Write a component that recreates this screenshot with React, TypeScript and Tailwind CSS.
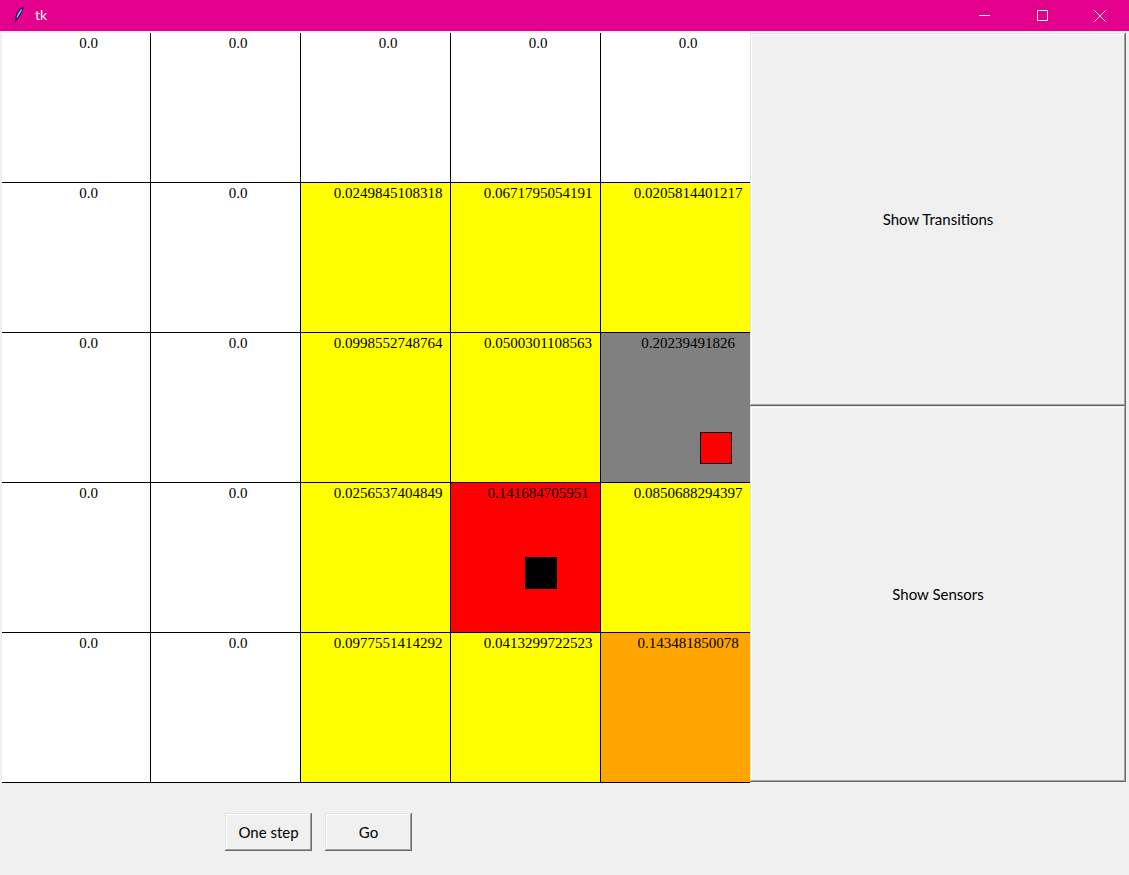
import React from "react";

type Cell = { v: string; bg: string; mark?: "red" | "black" };

const W = "bg-white";
const Y = "bg-[#ffff00]";

const rows: Cell[][] = [
  [
    { v: "0.0", bg: W },
    { v: "0.0", bg: W },
    { v: "0.0", bg: W },
    { v: "0.0", bg: W },
    { v: "0.0", bg: W },
  ],
  [
    { v: "0.0", bg: W },
    { v: "0.0", bg: W },
    { v: "0.0249845108318", bg: Y },
    { v: "0.0671795054191", bg: Y },
    { v: "0.0205814401217", bg: Y },
  ],
  [
    { v: "0.0", bg: W },
    { v: "0.0", bg: W },
    { v: "0.0998552748764", bg: Y },
    { v: "0.0500301108563", bg: Y },
    { v: "0.20239491826", bg: "bg-[#808080]", mark: "red" },
  ],
  [
    { v: "0.0", bg: W },
    { v: "0.0", bg: W },
    { v: "0.0256537404849", bg: Y },
    { v: "0.141684705951", bg: "bg-[#ff0000]", mark: "black" },
    { v: "0.0850688294397", bg: Y },
  ],
  [
    { v: "0.0", bg: W },
    { v: "0.0", bg: W },
    { v: "0.0977551414292", bg: Y },
    { v: "0.0413299722523", bg: Y },
    { v: "0.143481850078", bg: "bg-[#ffa500]" },
  ],
];

const raised =
  "shadow-[inset_-1px_-1px_#696969,inset_1px_1px_#e3e3e3,inset_-2px_-2px_#a0a0a0,inset_2px_2px_#ffffff]";

// tk feather icon
const Feather = () => (
  <svg width="10" height="16" viewBox="0 0 10 16">
    <path
      d="M9 0.8 C5.5 1.8 2.5 5.5 1.8 11.5 L3.2 11.8 C5.5 8.5 8.5 5 9 0.8 Z"
      fill="#4a7fd6"
      stroke="#0f1d3d"
      strokeWidth="1.1"
    />
    <path d="M7.8 2.6 L3 10.5" stroke="#b9d2f7" strokeWidth="0.8" />
    <path d="M2.2 11.6 L1.2 15" stroke="#111" strokeWidth="1.3" />
  </svg>
);

const App = () => {
  return (
    <div className="w-[1129px] h-[875px] bg-[#f0f0f0] flex flex-col overflow-hidden">
      <div className="h-[31px] bg-[#e3008c] flex items-center text-white shrink-0">
        <div className="ml-[14px] mb-[2px]">
          <Feather />
        </div>
        <span className="ml-[11px] mb-[2px] text-[14px] font-['Lato',sans-serif]">tk</span>
        <div className="ml-auto flex h-full">
          <div className="w-[58px] flex items-center justify-center">
            <div className="w-[11px] h-[1px] bg-white" />
          </div>
          <div className="w-[58px] flex items-center justify-center">
            <div className="w-[11px] h-[11px] border border-white" />
          </div>
          <div className="w-[58px] flex items-center justify-center">
            <svg width="12" height="12" viewBox="0 0 12 12">
              <path d="M0.5 0.5 L11.5 11.5 M11.5 0.5 L0.5 11.5" stroke="white" strokeWidth="1" />
            </svg>
          </div>
        </div>
      </div>

      <div className="flex mt-[2px]">
        <div className="pl-[2px]">
          <div className="grid grid-cols-[149px_150px_150px_150px_149px] border-b border-black">
            {rows.map((row, r) =>
              row.map((c, i) => (
                <div
                  key={`${r}-${i}`}
                  className={`relative ${r === 4 ? "h-[149px]" : "h-[150px] border-b"} ${i < 4 ? "border-r" : ""} border-black ${c.bg}`}
                >
                  <div className="pl-[25px] pt-[2px] text-center text-[15px] leading-[17px] text-black font-['Liberation_Serif',serif]">
                    {c.v}
                  </div>
                  {c.mark === "red" && (
                    <div className="absolute left-[99px] top-[99px] w-[32px] h-[32px] bg-[#ff0000] border border-black" />
                  )}
                  {c.mark === "black" && (
                    <div className="absolute left-[74px] top-[74px] w-[32px] h-[32px] bg-black" />
                  )}
                </div>
              ))
            )}
          </div>
        </div>
        <div className="w-[376px] flex flex-col font-['Lato',sans-serif] text-[15px] text-black">
          <div className={`h-[373px] flex items-center justify-center ${raised}`}>Show Transitions</div>
          <div className={`h-[376px] flex items-center justify-center ${raised}`}>Show Sensors</div>
        </div>
      </div>

      <div className="flex gap-[13px] pl-[225px] pt-[30px] font-['Lato',sans-serif] text-[15px] text-black">
        <div className={`w-[87px] h-[38px] flex items-center justify-center ${raised}`}>One step</div>
        <div className={`w-[87px] h-[38px] flex items-center justify-center ${raised}`}>Go</div>
      </div>
    </div>
  );
};

export default App;
